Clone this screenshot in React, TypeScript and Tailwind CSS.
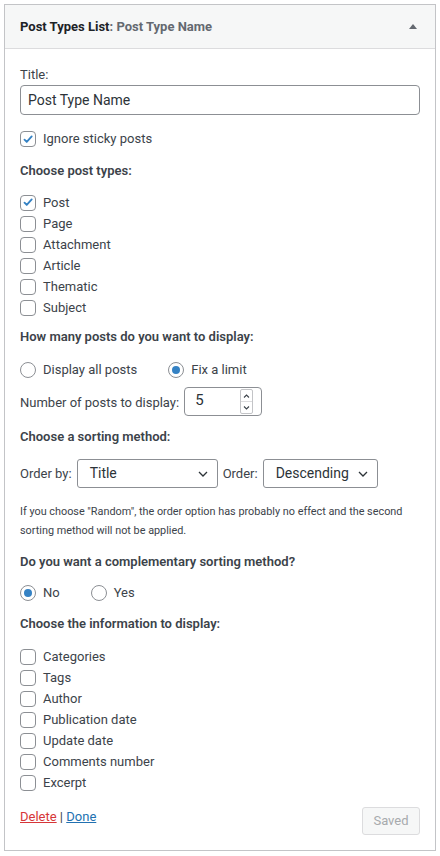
import type { ReactNode } from "react";

const CheckBox = ({ checked = false }: { checked?: boolean }) => (
  <span className="flex h-4 w-4 shrink-0 items-center justify-center rounded-[4px] border border-[#8c8f94] bg-white">
    {checked && (
      <svg viewBox="0 0 20 20" className="h-[17px] w-[17px]">
        <path
          d="M5 10.2l3.2 3.3L15.3 5.6"
          fill="none"
          stroke="#3582c4"
          strokeWidth="2.6"
          strokeLinecap="round"
          strokeLinejoin="round"
        />
      </svg>
    )}
  </span>
);

const Radio = ({ checked = false }: { checked?: boolean }) => (
  <span className="flex h-4 w-4 shrink-0 items-center justify-center rounded-full border border-[#8c8f94] bg-white">
    {checked && <span className="h-2 w-2 rounded-full bg-[#3582c4]" />}
  </span>
);

const CheckRow = ({ label, checked }: { label: string; checked?: boolean }) => (
  <label className="flex h-[21px] items-center gap-[7px]">
    <CheckBox checked={checked} />
    <span>{label}</span>
  </label>
);

const RadioItem = ({ label, checked }: { label: string; checked?: boolean }) => (
  <label className="flex items-center gap-[7px]">
    <Radio checked={checked} />
    <span>{label}</span>
  </label>
);

const Heading = ({ children, className = "" }: { children: ReactNode; className?: string }) => (
  <p className={`h-5 font-semibold leading-5 ${className}`}>{children}</p>
);

const Chevron = () => (
  <svg viewBox="0 0 10 6" className="h-[6px] w-[10px]">
    <path d="M1 1l4 4 4-4" fill="none" stroke="#2c3338" strokeWidth="1.3" />
  </svg>
);

const Select = ({ value, className }: { value: string; className: string }) => (
  <div
    className={`flex h-[29px] items-center justify-between rounded-[3px] border border-[#8c8f94] bg-white pl-3 pr-[9px] text-[14px] text-[#2c3338] ${className}`}
  >
    <span>{value}</span>
    <Chevron />
  </div>
);

const infoFields = [
  "Categories",
  "Tags",
  "Author",
  "Publication date",
  "Update date",
  "Comments number",
  "Excerpt",
];

const postTypes = ["Post", "Page", "Attachment", "Article", "Thematic", "Subject"];

export default function App() {
  return (
    <div className="min-h-[856px] bg-white p-1 font-['Roboto',sans-serif] text-[13px] text-[#3c434a]">
      <div className="border border-[#c3c4c7] bg-white">
        {/* widget header */}
        <div className="flex h-[44px] items-center justify-between border-b border-[#dcdcde] bg-[#f6f7f7] pl-[15px] pr-[18px]">
          <h3 className="text-[13px] font-bold text-[#1d2327]">
            Post Types List<span className="text-[#646970]">: Post Type Name</span>
          </h3>
          <svg viewBox="0 0 8 5" className="h-[5px] w-2">
            <path d="M4 0L8 5H0z" fill="#646970" />
          </svg>
        </div>

        {/* widget body */}
        <div className="flex flex-col px-[15px] pb-[15px] pt-[16px]">
          <label className="h-5 leading-5">Title:</label>
          <div className="flex h-[30px] items-center rounded-[4px] border border-[#8c8f94] px-[7px] text-[14px] text-[#2c3338]">
            Post Type Name
          </div>

          <div className="mt-[14px]">
            <label className="flex h-5 items-center gap-[7px]">
              <CheckBox checked />
              <span>Ignore sticky posts</span>
            </label>
          </div>

          <Heading className="mt-[12px]">Choose post types:</Heading>
          <div className="mt-[11px] flex flex-col">
            {postTypes.map((t) => (
              <CheckRow key={t} label={t} checked={t === "Post"} />
            ))}
          </div>

          <Heading className="mt-[9px]">How many posts do you want to display:</Heading>
          <div className="mt-[13px] flex h-5 items-center gap-[31px]">
            <RadioItem label="Display all posts" />
            <RadioItem label="Fix a limit" checked />
          </div>

          <div className="mt-[7px] flex items-center gap-[5px]">
            <span className="mt-[3px]">Number of posts to display:</span>
            <div className="flex h-[29px] w-[78px] items-center justify-between rounded-[4px] border border-[#8c8f94] pl-[10px] pr-2 text-[15px] text-[#2c3338]">
              <span className="-mt-[2px]">5</span>
              <div className="flex h-[25px] w-[13px] flex-col rounded-[2px] border border-[#c3c4c7]">
                <div className="flex flex-1 items-center justify-center border-b border-[#dcdcde]">
                  <svg viewBox="0 0 7 4" className="h-[4px] w-[7px]">
                    <path d="M1 3.5L3.5 1 6 3.5" fill="none" stroke="#3c434a" strokeWidth="1.1" />
                  </svg>
                </div>
                <div className="flex flex-1 items-center justify-center">
                  <svg viewBox="0 0 7 4" className="h-[4px] w-[7px]">
                    <path d="M1 .5L3.5 3 6 .5" fill="none" stroke="#3c434a" strokeWidth="1.1" />
                  </svg>
                </div>
              </div>
            </div>
          </div>

          <Heading className="mt-[11px]">Choose a sorting method:</Heading>
          <div className="mt-[12px] flex items-center gap-[5px]">
            <span>Order by:</span>
            <Select value="Title" className="w-[141px]" />
            <span>Order:</span>
            <Select value="Descending" className="w-[115px]" />
          </div>

          <p className="mt-[14px] text-[10.85px] leading-[19px]">
            If you choose "Random", the order option has probably no effect and the second sorting
            method will not be applied.
          </p>

          <Heading className="mt-[12px]">Do you want a complementary sorting method?</Heading>
          <div className="mt-[11px] flex h-5 items-center gap-[31px]">
            <RadioItem label="No" checked />
            <RadioItem label="Yes" />
          </div>

          <Heading className="mt-[11px]">Choose the information to display:</Heading>
          <div className="mt-[12px] flex flex-col">
            {infoFields.map((f) => (
              <CheckRow key={f} label={f} />
            ))}
          </div>

          {/* footer actions */}
          <div className="mt-[14px] flex items-start justify-between">
            <div className="leading-5">
              <a className="text-[#d63638] underline">Delete</a>
              <span> | </span>
              <a className="text-[#2271b1] underline">Done</a>
            </div>
            <button
              disabled
              className="flex h-[28px] w-[58px] items-center justify-center rounded-[3px] border border-[#dcdcde] bg-[#f6f7f7] text-[13px] text-[#a7aaad]"
            >
              Saved
            </button>
          </div>
        </div>
      </div>
    </div>
  );
}
